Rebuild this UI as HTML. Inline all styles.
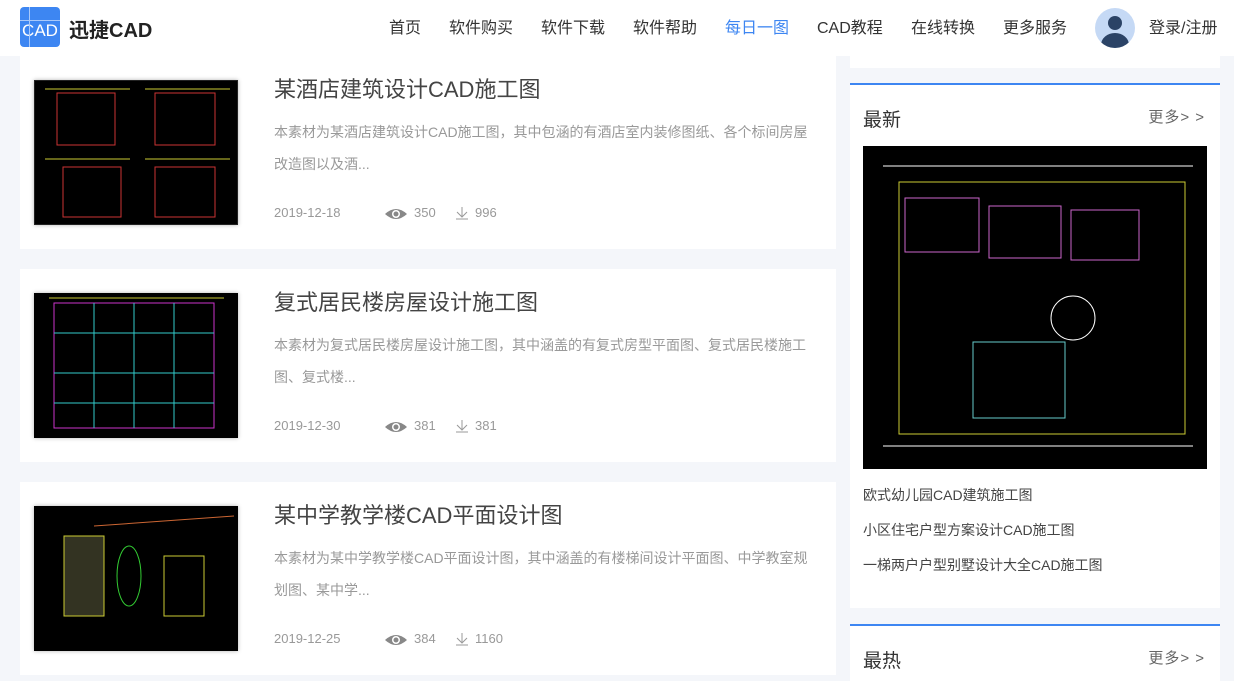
<!DOCTYPE html>
<html><head><meta charset="utf-8"><style>
*{margin:0;padding:0;box-sizing:border-box}
body{width:1234px;height:681px;overflow:hidden;background:#f4f6fa;font-family:"Liberation Sans","Noto Sans CJK SC",sans-serif;position:relative}
.hdr{position:absolute;left:0;top:0;width:1234px;height:56px;background:#fff}
.logo{position:absolute;left:20px;top:7px;width:40px;height:40px;background:#3d86f2;border-radius:4px;color:#fff;font-size:17px;line-height:48px;text-align:center;overflow:hidden}
.logo:before{content:"";position:absolute;left:9px;top:0;width:1px;height:40px;background:#a9c9fa}
.logo:after{content:"";position:absolute;left:0;top:13px;width:40px;height:1px;background:#a9c9fa}
.brand{position:absolute;left:69px;top:14px;font-size:20px;color:#222;font-weight:bold}
.nav{position:absolute;top:14px;font-size:16px;color:#333}
.avatar{position:absolute;left:1095px;top:8px;width:40px;height:40px;border-radius:50%;background:#c5d9f5;overflow:hidden}
.avatar i{position:absolute;left:13px;top:8px;width:14px;height:14px;border-radius:50%;background:#2b4366}
.avatar b{position:absolute;left:6px;top:25px;width:28px;height:24px;border-radius:50%;background:#2b4366}
.card{position:absolute;left:20px;width:816px;height:193px;background:#fff}
.img{position:absolute;left:14px;width:204px;height:145px;background:#000;box-shadow:0 0 4px rgba(0,0,0,.3)}
.t{position:absolute;left:254px;top:16px;font-size:22px;color:#444}
.d{position:absolute;left:254px;top:60px;width:546px;font-size:14px;color:#999;line-height:32px}
.m{position:absolute;left:254px;top:149px;font-size:13px;color:#999;width:400px;height:20px}
.m span{position:absolute;top:0}
.side{position:absolute;left:850px;width:370px;background:#fff}
.side h3{position:absolute;left:13px;top:20px;font-size:19px;font-weight:normal;color:#333}
.more{position:absolute;right:15px;top:21px;font-size:15px;color:#666;letter-spacing:1px}
.li{position:absolute;left:13px;font-size:14px;color:#444}
</style></head><body>
<div class="hdr">
<div class="logo">CAD</div><div class="brand">迅捷CAD</div>
<span class="nav" style="left:389px">首页</span>
<span class="nav" style="left:449px">软件购买</span>
<span class="nav" style="left:541px">软件下载</span>
<span class="nav" style="left:633px">软件帮助</span>
<span class="nav" style="left:725px;color:#3d86f2">每日一图</span>
<span class="nav" style="left:817px">CAD教程</span>
<span class="nav" style="left:911px">在线转换</span>
<span class="nav" style="left:1003px">更多服务</span>
<div class="avatar"><i></i><b></b></div>
<span class="nav" style="left:1149px">登录/注册</span>
</div>

<div class="card" style="top:56px">
<div class="img" style="top:24px;border:1px solid #222"><svg width="204" height="145"><g fill="none" stroke-width="1"><rect x="22" y="12" width="58" height="52" stroke="#c33"/><rect x="120" y="12" width="60" height="52" stroke="#c33"/><rect x="28" y="86" width="58" height="50" stroke="#c33"/><rect x="120" y="86" width="60" height="50" stroke="#c33"/><path d="M10 8H95M110 8H195M10 78H95M110 78H195" stroke="#cc3"/></g></svg></div>
<div class="t">某酒店建筑设计CAD施工图</div>
<div class="d">本素材为某酒店建筑设计CAD施工图，其中包涵的有酒店室内装修图纸、各个标间房屋改造图以及酒...</div>
<div class="m"><span style="left:0">2019-12-18</span><span style="left:110px;top:2px"><svg width="24" height="14"><path d="M1 7Q12 -3 23 7Q12 17 1 7Z" fill="#888"/><circle cx="12" cy="7" r="4" fill="#fff"/><circle cx="12" cy="7" r="2.5" fill="#888"/></svg></span><span style="left:140px">350</span><span style="left:181px;top:1px"><svg width="14" height="14"><path d="M7 1V11M2 6L7 11L12 6M1 13H13" stroke="#999" fill="none"/></svg></span><span style="left:201px">996</span></div>
</div>

<div class="card" style="top:269px">
<div class="img" style="top:24px"><svg width="204" height="145"><g fill="none"><rect x="20" y="10" width="160" height="125" stroke="#c3c"/><path d="M20 40H180M20 80H180M20 110H180M60 10V135M100 10V135M140 10V135" stroke="#3cc"/><path d="M15 5H190" stroke="#cc3"/></g></svg></div>
<div class="t">复式居民楼房屋设计施工图</div>
<div class="d">本素材为复式居民楼房屋设计施工图，其中涵盖的有复式房型平面图、复式居民楼施工图、复式楼...</div>
<div class="m"><span style="left:0">2019-12-30</span><span style="left:110px;top:2px"><svg width="24" height="14"><path d="M1 7Q12 -3 23 7Q12 17 1 7Z" fill="#888"/><circle cx="12" cy="7" r="4" fill="#fff"/><circle cx="12" cy="7" r="2.5" fill="#888"/></svg></span><span style="left:140px">381</span><span style="left:181px;top:1px"><svg width="14" height="14"><path d="M7 1V11M2 6L7 11L12 6M1 13H13" stroke="#999" fill="none"/></svg></span><span style="left:201px">381</span></div>
</div>

<div class="card" style="top:482px">
<div class="img" style="top:24px"><svg width="204" height="145"><g fill="none"><rect x="30" y="30" width="40" height="80" stroke="#cc3" fill="#332"/><ellipse cx="95" cy="70" rx="12" ry="30" stroke="#3c3"/><rect x="130" y="50" width="40" height="60" stroke="#cc3"/><path d="M60 20L200 10" stroke="#c63"/></g></svg></div>
<div class="t">某中学教学楼CAD平面设计图</div>
<div class="d">本素材为某中学教学楼CAD平面设计图，其中涵盖的有楼梯间设计平面图、中学教室规划图、某中学...</div>
<div class="m"><span style="left:0">2019-12-25</span><span style="left:110px;top:2px"><svg width="24" height="14"><path d="M1 7Q12 -3 23 7Q12 17 1 7Z" fill="#888"/><circle cx="12" cy="7" r="4" fill="#fff"/><circle cx="12" cy="7" r="2.5" fill="#888"/></svg></span><span style="left:140px">384</span><span style="left:181px;top:1px"><svg width="14" height="14"><path d="M7 1V11M2 6L7 11L12 6M1 13H13" stroke="#999" fill="none"/></svg></span><span style="left:201px">1160</span></div>
</div>

<div class="side" style="top:56px;height:12px"></div>
<div class="side" style="top:83px;height:525px;border-top:2px solid #3d86f2">
<h3>最新</h3><span class="more">更多&gt; &gt;</span>
<div style="position:absolute;left:13px;top:61px;width:344px;height:323px;background:#000"><svg width="344" height="323"><g fill="none"><rect x="36" y="36" width="286" height="252" stroke="#cc3"/><rect x="42" y="52" width="74" height="54" stroke="#c6c"/><rect x="126" y="60" width="72" height="52" stroke="#c6c"/><rect x="208" y="64" width="68" height="50" stroke="#c6c"/><rect x="110" y="196" width="92" height="76" stroke="#6cc"/><circle cx="210" cy="172" r="22" stroke="#fff"/><path d="M20 20H330M20 300H330" stroke="#fff"/></g></svg></div>
<div class="li" style="top:400px">欧式幼儿园CAD建筑施工图</div>
<div class="li" style="top:435px">小区住宅户型方案设计CAD施工图</div>
<div class="li" style="top:470px">一梯两户户型别墅设计大全CAD施工图</div>
</div>
<div class="side" style="top:624px;height:57px;border-top:2px solid #3d86f2">
<h3>最热</h3><span class="more">更多&gt; &gt;</span>
</div>
</body></html>
